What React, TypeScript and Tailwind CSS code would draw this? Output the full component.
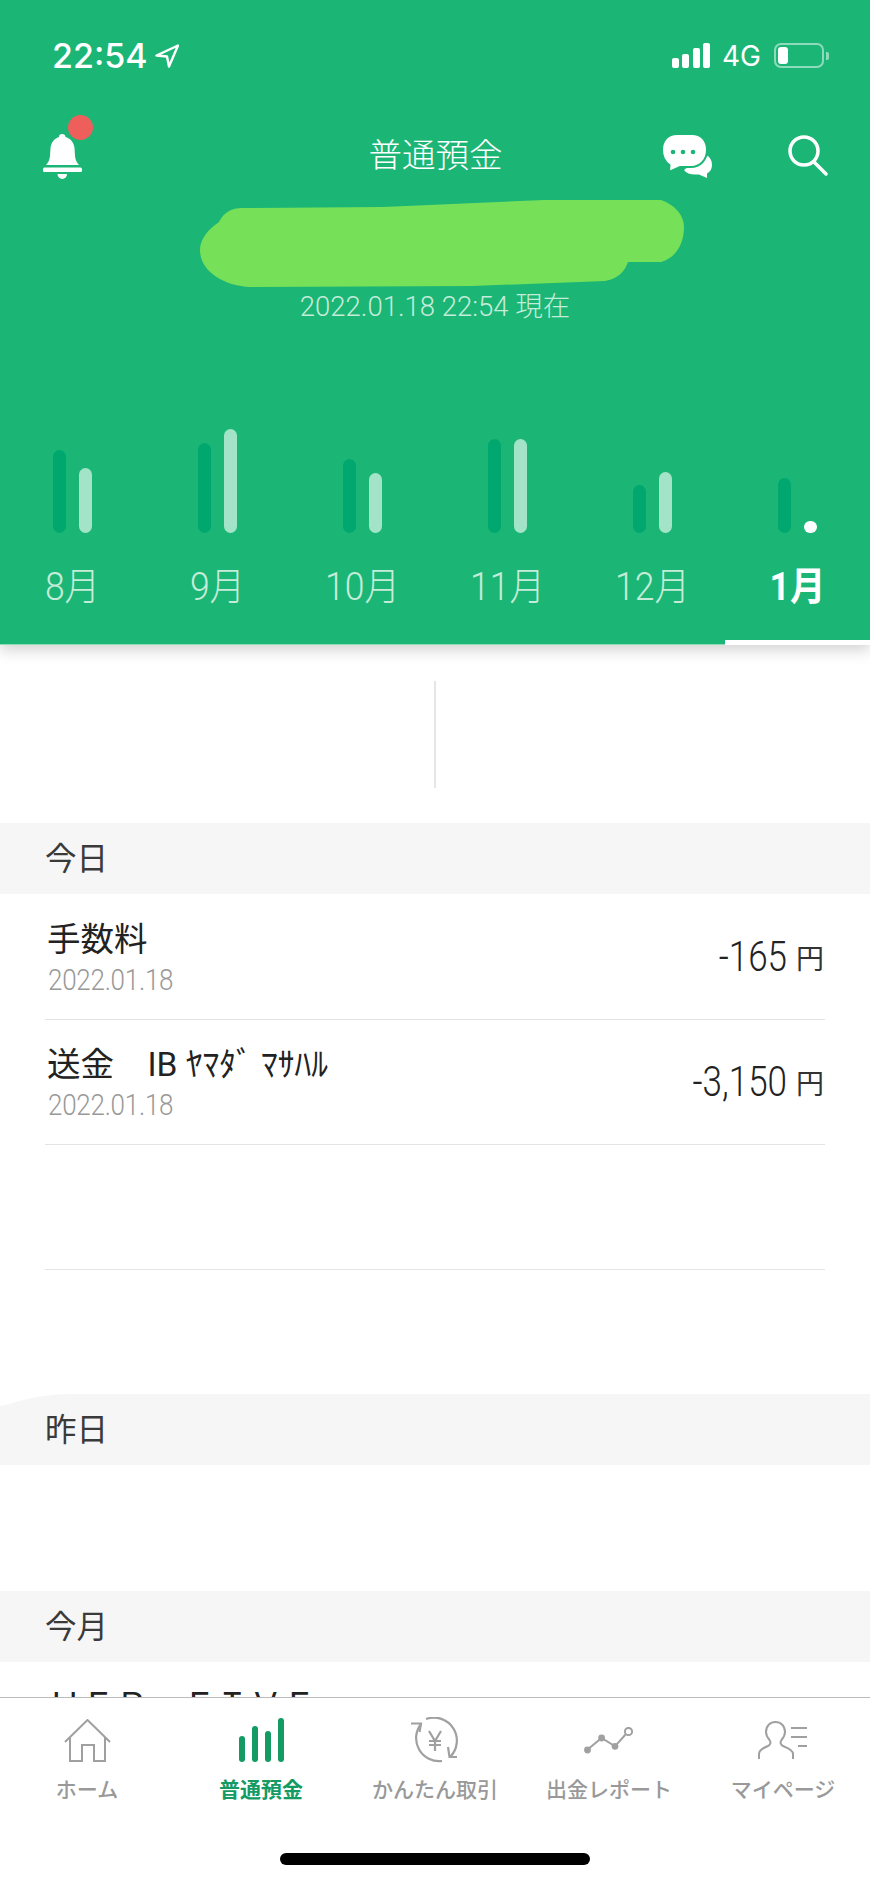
import React from 'react';

const months = [
    { label: '8月', dark: 'h-[83px]', light: 'h-[65px]' },
    { label: '9月', dark: 'h-[90px]', light: 'h-[104px]' },
    { label: '10月', dark: 'h-[74px]', light: 'h-[60px]' },
    { label: '11月', dark: 'h-[94px]', light: 'h-[94px]' },
    { label: '12月', dark: 'h-[48px]', light: 'h-[61px]' },
];

function BellIcon() {
    return (
        <svg width="39" height="45" viewBox="0 0 39 45" fill="#fff">
            <path d="M19 0C21 0 22.5 1.2 22.5 3C28 4.5 31 9 31.5 14L32 22C32.3 26 34 29 36 31H3C5 29 6.7 26 7 22L7.5 14C8 9 11 4.5 16 3C16 1.2 17 0 19 0Z" />
            <rect x="0" y="33.5" width="39" height="4.5" rx="1.5" />
            <path d="M14.5 40H24A4.75 5 0 0 1 14.5 40Z" />
        </svg>
    );
}

function ChatIcon() {
    return (
        <svg width="50" height="44" viewBox="0 0 50 44">
            <path fill="#fff" d="M42 20C47 22 50 25 50 31C50 35 48 38 45 39.5L45 44L37 40.5H33C28 40.5 24 39 22 36Z" />
            <path fill="#fff" stroke="#1bb676" strokeWidth="2" d="M15 0H30C39 0 45 6 45 16C45 26 38 33 29 33H18L7 38L7.5 31C3 28 0 23 0 16C0 6 6 0 15 0Z" />
            <circle cx="11" cy="18" r="2.3" fill="#1bb676" />
            <circle cx="21" cy="18" r="2.3" fill="#1bb676" />
            <circle cx="31" cy="18" r="2.3" fill="#1bb676" />
        </svg>
    );
}

function SearchIcon() {
    return (
        <svg width="40" height="42" viewBox="0 0 40 42" fill="none" stroke="#fff" strokeWidth="3.5" strokeLinecap="round">
            <circle cx="16" cy="16" r="14" />
            <path d="M26 27L38 39" />
        </svg>
    );
}

function HomeIcon() {
    return (
        <svg width="47" height="43" viewBox="0 0 47 43" fill="none" stroke="#a0a0a0" strokeWidth="2">
            <path d="M1 23L23.5 1L46 23" />
            <path d="M6 18V42H18V26H30V42H41V18" />
        </svg>
    );
}

function BarsIcon() {
    return (
        <svg width="45" height="44" viewBox="0 0 45 44" fill="#149a63">
            <rect x="0" y="18" width="6" height="26" rx="3" />
            <rect x="13" y="8" width="6" height="36" rx="3" />
            <rect x="26" y="13" width="6" height="31" rx="3" />
            <rect x="39" y="0" width="6" height="44" rx="3" />
        </svg>
    );
}

function YenIcon() {
    return (
        <svg width="56" height="46" viewBox="17 17 56 46" fill="none" stroke="#a0a0a0" strokeWidth="2.2">
            <path d="M36 19A23 23 0 0 1 60 57" />
            <path d="M58 47L59.5 57L67 57" />
            <path d="M52 61A23 23 0 0 1 31 24" />
            <path d="M21 23.5L31 23.5L29.5 32" />
            <path d="M39 31L45 41L51 31M39 41H51M39 45H51M45 41V51" />
        </svg>
    );
}

function ReportIcon() {
    return (
        <svg width="50" height="27" viewBox="0 0 50 27" fill="#a0a0a0" stroke="#a0a0a0" strokeWidth="2">
            <path fill="none" d="M3 23L17.6 11L31 19.3L41.5 7.5" />
            <circle cx="3.5" cy="23" r="2.4" />
            <circle cx="17.6" cy="11" r="2.4" />
            <circle cx="31" cy="19.3" r="2.4" />
            <circle cx="44.5" cy="4.5" r="3.6" fill="#fff" />
        </svg>
    );
}

function PersonIcon() {
    return (
        <svg width="50" height="38" viewBox="0 0 50 38" fill="none" stroke="#a0a0a0" strokeWidth="2">
            <path d="M1 38V33C1 29 5 27 9 25.5C13 24 13 21 11.5 19C9 16 8 14 8 11C8 5 12 1 17.5 1C23 1 27 5 27 11C27 14 26 16 23.5 19C22 21 22 24 26 25.5C30 27 35 29 35 33V38" />
            <path d="M33 7H49M33 16H49M40 25H49" />
        </svg>
    );
}

function SectionBand({ label }: { label: string }) {
    return (
        <div className="h-[71px] shrink-0 bg-[#f6f6f6] pl-[45px] pt-[2px] flex items-center text-[31.5px] text-[#3a3a3a]">
            {label}
        </div>
    );
}

function TxRow({ title, amount, height }: { title: string; amount: string; height: string }) {
    return (
        <div className={`${height} shrink-0 mx-[45px] pl-[2px] pr-[1px] border-b border-[#e4e4e4] flex items-center justify-between`}>
            <div className="flex flex-col pt-[3px]">
                <div className="text-[33.5px] leading-[36px] text-[#222] whitespace-pre">{title}</div>
                <div className="mt-[7px] ml-[1px] text-[26px] leading-[30px] font-light tracking-[-0.01em] text-[#999] inline-block scale-y-[1.15] origin-left">2022.01.18</div>
            </div>
            <div className="flex items-baseline pt-[3px]">
                <span className="text-[35px] font-light text-[#222] inline-block scale-y-[1.2]">{amount}</span>
                <span className="ml-[9px] text-[28px] text-[#333]">円</span>
            </div>
        </div>
    );
}

function Tab({ label, active, children }: { label: string; active?: boolean; children: React.ReactNode }) {
    return (
        <div className="flex flex-col items-center">
            <div className="h-[46px] flex items-center justify-center">{children}</div>
            <div className={active ? 'mt-[12px] text-[21px] leading-[30px] font-bold text-[#149a63]' : 'mt-[12px] text-[21px] leading-[30px] font-medium text-[#999]'}>
                {label}
            </div>
        </div>
    );
}

export default function App() {
    return (
        <div className="w-[870px] h-[1883px] bg-white overflow-hidden flex flex-col font-['Roboto','Noto_Sans_CJK_JP',sans-serif]">
            <header className="relative z-10 h-[645px] shrink-0 flex flex-col bg-[#1bb676] border-b border-[#8fdcb8] shadow-[0_5px_14px_rgba(0,0,0,0.18)]">
                {/* status bar */}
                <div className="mt-[42px] h-[27px] pl-[52px] pr-[41px] flex items-center justify-between text-white font-['Inter',sans-serif]">
                    <div className="flex items-center gap-[7px]">
                        <span className="text-[34px] leading-none font-medium">22:54</span>
                        <svg width="24" height="24" viewBox="0 0 24 24" fill="none" stroke="#fff" strokeWidth="2.4" strokeLinejoin="round">
                            <path d="M23 1.5L1.5 11.5L12 12.5L14 22.5Z" />
                        </svg>
                    </div>
                    <div className="flex items-center">
                        <svg width="38" height="25" viewBox="0 0 38 25" fill="#fff">
                            <rect x="0" y="15" width="7" height="10" rx="2" />
                            <rect x="10" y="11" width="7" height="14" rx="2" />
                            <rect x="21" y="5" width="7" height="20" rx="2" />
                            <rect x="31" y="0" width="7" height="25" rx="2" />
                        </svg>
                        <span className="ml-[12px] text-[28px] leading-none">4G</span>
                        <div className="ml-[13px] w-[50px] h-[25px] border-2 border-white/50 rounded-[7px] p-[2px]">
                            <div className="w-[10px] h-full bg-white rounded-[3px]" />
                        </div>
                        <div className="ml-[2px] w-[3px] h-[8px] bg-white/50 rounded-r-[2px]" />
                    </div>
                </div>

                {/* nav */}
                <div className="mt-[62px] h-[46px] pl-[43px] pr-[42px] grid grid-cols-3 items-center">
                    <div className="relative w-[39px] h-[45px]">
                        <BellIcon />
                        <div className="absolute left-[25px] top-[-19px] w-[25px] h-[25px] rounded-full bg-[#ee5f5b]" />
                    </div>
                    <div className="text-center text-[33.5px] text-white font-light">普通預金</div>
                    <div className="flex items-center justify-end gap-[76px]">
                        <ChatIcon />
                        <SearchIcon />
                    </div>
                </div>

                {/* painted-over balance */}
                <svg className="mt-[23px] ml-[200px]" width="484" height="87" viewBox="0 0 484 87" fill="#76e058">
                    <path d="M42 8L183 7L344 0H461C475 5 484 15 484 27C484 45 475 58 461 62H428C425 70 420 78 405 81L272 86L50 87C25 86 0 72 0 50C0 38 10 28 19 22C24 12 32 8 42 8Z" />
                </svg>
                <div className="mt-[1px] text-center text-[27.5px] leading-[38px] font-light text-[#c5ecd9]">2022.01.18 22:54 現在</div>

                {/* monthly bars */}
                <div className="mt-auto mb-[35px] grid grid-cols-6">
                    {months.map((m) => (
                        <div key={m.label} className="flex flex-col items-center">
                            <div className="h-[105px] flex items-end gap-[13px]">
                                <div className={`${m.dark} w-[13px] rounded-full bg-[#00a86f]`} />
                                <div className={`${m.light} w-[13px] rounded-full bg-[#a3e3c8]`} />
                            </div>
                            <div className="mt-[32px] text-[35.5px] leading-[44px] font-light text-[#c5ecd9] scale-y-[1.1]">{m.label}</div>
                        </div>
                    ))}
                    <div className="flex flex-col items-center">
                        <div className="h-[105px] flex items-end gap-[13px]">
                            <div className="h-[55px] w-[13px] rounded-full bg-[#00a86f]" />
                            <div className="h-[12px] w-[13px] rounded-full bg-white" />
                        </div>
                        <div className="mt-[32px] text-[35.5px] leading-[44px] font-bold text-white scale-y-[1.1]">1月</div>
                    </div>
                </div>
                <div className="absolute right-0 bottom-[-1px] w-[145px] h-[5px] bg-white" />
            </header>

            <main className="flex-1 min-h-0 overflow-hidden flex flex-col">
                <div className="h-[178px] shrink-0 flex items-center justify-center">
                    <div className="w-[2px] h-[107px] bg-[#e6e6e6]" />
                </div>

                <SectionBand label="今日" />
                <TxRow title="手数料" amount="-165" height="h-[126px]" />
                <TxRow title="送金　IB ﾔﾏﾀﾞ ﾏｻﾊﾙ" amount="-3,150" height="h-[125px]" />
                <div className="h-[125px] shrink-0 mx-[45px] border-b border-[#e4e4e4]" />
                <div className="h-[124px] shrink-0" />

                <div className="relative shrink-0">
                    <SectionBand label="昨日" />
                    <svg className="absolute left-0 top-0" width="70" height="12" viewBox="0 0 70 12" fill="#fff">
                        <path d="M0 0H70C40 1 25 5 10 10L0 12Z" />
                    </svg>
                </div>
                <div className="h-[126px] shrink-0" />

                <SectionBand label="今月" />
                <div className="pl-[48px] pt-[24px] text-[33.5px] leading-[40px] text-[#222] whitespace-pre">ＨＥＲ　ＦＩＶＥ</div>
            </main>

            <nav className="h-[186px] shrink-0 relative bg-white border-t border-[#bbb] pt-[19px] grid grid-cols-5 items-start">
                <Tab label="ホーム"><HomeIcon /></Tab>
                <Tab label="普通預金" active><BarsIcon /></Tab>
                <Tab label="かんたん取引"><YenIcon /></Tab>
                <Tab label="出金レポート"><ReportIcon /></Tab>
                <Tab label="マイページ"><PersonIcon /></Tab>
                <div className="absolute left-[280px] bottom-[18px] w-[310px] h-[12px] rounded-full bg-black" />
            </nav>
        </div>
    );
}
